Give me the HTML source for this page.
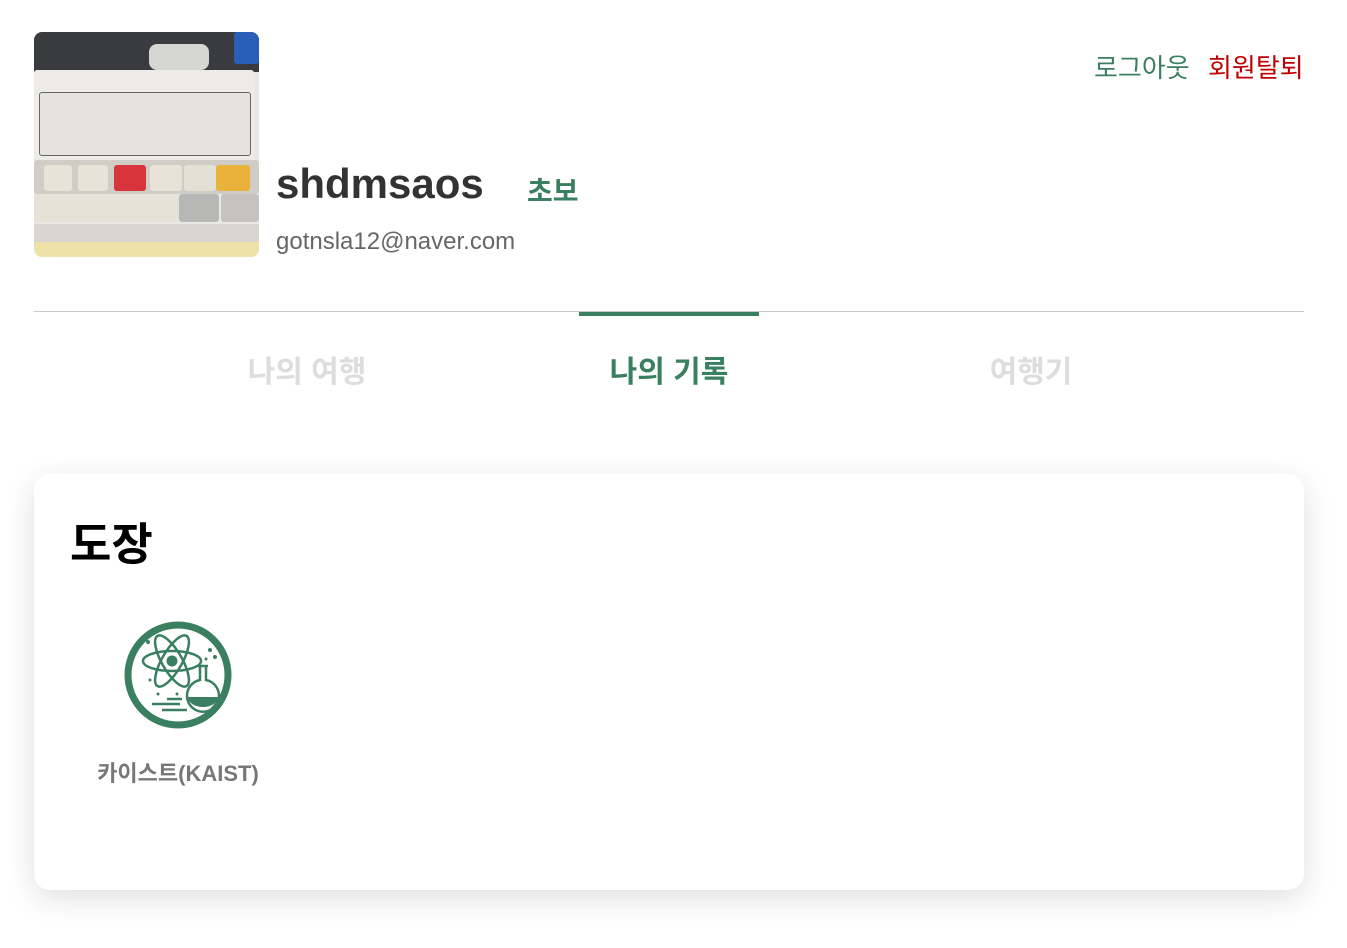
<!DOCTYPE html>
<html><head><meta charset="utf-8"><style>
body{margin:0;width:1347px;height:948px;background:#fff;font-family:"Liberation Sans","Noto Sans CJK KR",sans-serif;position:relative;overflow:hidden}
.a{position:absolute}
.photo{left:34px;top:32px;width:225px;height:225px;border-radius:8px;overflow:hidden;background:#e9e8e3}
.k{position:absolute;border-radius:3px}
</style></head><body>
<div class="a photo">
 <div class="k" style="left:0;top:0;width:225px;height:40px;background:#3a3b3e;border-radius:0"></div>
 <div class="k" style="left:200px;top:0;width:25px;height:32px;background:#2a5fb8"></div>
 <div class="k" style="left:115px;top:12px;width:60px;height:26px;background:#d6d6d3;border-radius:8px"></div>
 <div class="k" style="left:0;top:38px;width:220px;height:90px;background:#ecebe8"></div>
 <div class="k" style="left:5px;top:60px;width:210px;height:62px;border:1px solid #666;background:#e4e3e0"></div>
 <div class="k" style="left:0;top:128px;width:225px;height:34px;background:#cfcdc6"></div>
 <div class="k" style="left:10px;top:133px;width:28px;height:26px;background:#e7e3d8"></div>
 <div class="k" style="left:44px;top:133px;width:30px;height:26px;background:#e7e3d8"></div>
 <div class="k" style="left:80px;top:133px;width:32px;height:26px;background:#d9333e"></div>
 <div class="k" style="left:116px;top:133px;width:32px;height:26px;background:#e7e3d8"></div>
 <div class="k" style="left:150px;top:133px;width:32px;height:26px;background:#e3e0d6"></div>
 <div class="k" style="left:182px;top:133px;width:34px;height:26px;background:#e9b23a"></div>
 <div class="k" style="left:0;top:162px;width:145px;height:28px;background:#e5e2d8"></div>
 <div class="k" style="left:145px;top:162px;width:40px;height:28px;background:#b7b7b5"></div>
 <div class="k" style="left:187px;top:162px;width:38px;height:28px;background:#c4c3c0"></div>
 <div class="k" style="left:0;top:192px;width:225px;height:18px;background:#d7d5ce;border-radius:0"></div>
 <div class="k" style="left:0;top:210px;width:225px;height:15px;background:#efe2a8;border-radius:0"></div>
</div>
<div class="a" style="left:276px;top:160px;font-size:42px;font-weight:bold;color:#333">shdmsaos</div>
<div class="a" style="left:527px;top:170px;font-size:28px;font-weight:bold;color:#3a8060">초보</div>
<div class="a" style="left:276px;top:228px;font-size:24px;color:#666">gotnsla12@naver.com</div>
<div class="a" style="left:1094px;top:48px;font-size:26px;color:#3a8060">로그아웃</div>
<div class="a" style="left:1208px;top:48px;font-size:26px;color:#c00000">회원탈퇴</div>
<div class="a" style="left:34px;top:311px;width:1270px;height:1px;background:#ccc"></div>
<div class="a" style="left:579px;top:312px;width:180px;height:4px;background:#3a8060"></div>
<div class="a" style="left:207px;top:347px;width:200px;text-align:center;font-size:30px;font-weight:bold;color:#ddd">나의 여행</div>
<div class="a" style="left:569px;top:347px;width:200px;text-align:center;font-size:30px;font-weight:bold;color:#3a8060">나의 기록</div>
<div class="a" style="left:931px;top:347px;width:200px;text-align:center;font-size:30px;font-weight:bold;color:#ddd">여행기</div>
<div class="a" style="left:34px;top:474px;width:1270px;height:416px;border-radius:16px;background:#fff;box-shadow:0 8px 30px rgba(0,0,0,0.13)"></div>
<div class="a" style="left:70px;top:508px;font-size:45px;font-weight:bold;color:#000">도장</div>
<svg class="a" style="left:122px;top:619px" width="112" height="112" viewBox="0 0 112 112" fill="none" stroke="#3a8060">
 <circle cx="56" cy="56" r="50" stroke-width="7"/>
 <g stroke-width="2.5">
  <ellipse cx="50" cy="42" rx="29" ry="10"/>
  <ellipse cx="50" cy="42" rx="29" ry="10" transform="rotate(60 50 42)"/>
  <ellipse cx="50" cy="42" rx="29" ry="10" transform="rotate(-60 50 42)"/>
  <path d="M76 47h10M78 47v14a16 16 0 1 0 6 0V47"/>
  <path d="M30 85h28M40 91h25M45 80h15"/>
 </g>
 <circle cx="50" cy="42" r="5" fill="#3a8060"/>
 <path d="M66 78a15 10 0 0 0 30 0z" fill="#3a8060" stroke="none"/>
 <g fill="#3a8060" stroke="none"><circle cx="88" cy="31" r="2"/><circle cx="93" cy="38" r="2"/><circle cx="84" cy="40" r="1.5"/><circle cx="28" cy="61" r="1.5"/><circle cx="36" cy="75" r="1.5"/><circle cx="55" cy="75" r="1.5"/><circle cx="26" cy="23" r="2"/></g>
</svg>
<div class="a" style="left:78px;top:756px;width:200px;text-align:center;font-size:22px;font-weight:bold;color:#777">카이스트(KAIST)</div>
</body></html>
